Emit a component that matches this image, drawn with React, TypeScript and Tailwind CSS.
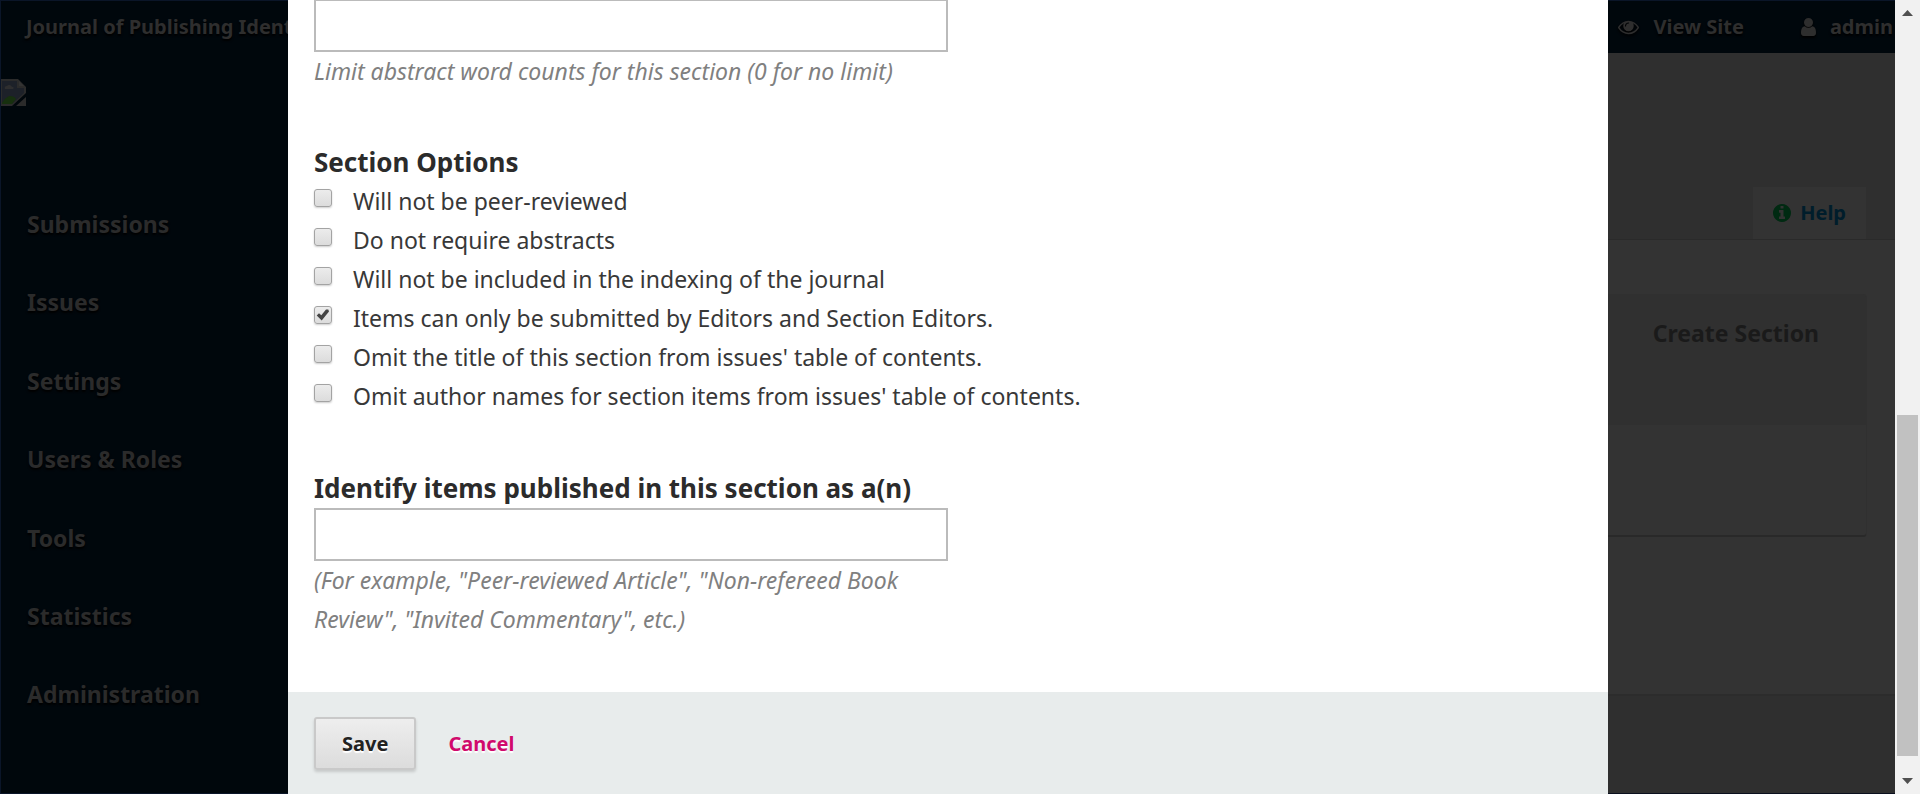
import React from "react";

const navItems = ["Submissions", "Issues", "Settings", "Users & Roles", "Tools", "Statistics", "Administration"];

const options = [
  { id: "reviewed", label: "Will not be peer-reviewed", checked: false },
  { id: "abstracts", label: "Do not require abstracts", checked: false },
  { id: "indexing", label: "Will not be included in the indexing of the journal", checked: false },
  { id: "editors", label: "Items can only be submitted by Editors and Section Editors.", checked: true },
  { id: "title", label: "Omit the title of this section from issues' table of contents.", checked: false },
  { id: "authors", label: "Omit author names for section items from issues' table of contents.", checked: false },
];

function EyeIcon() {
  return (
    <svg className="size-[21px] drop-shadow-[0_2px_1px_#000]" viewBox="0 64 1792 1792" fill="currentColor" aria-hidden="true">
      <path d="M1664 960q-152-236-381-353 61 104 61 225 0 185-131.5 316.5t-316.5 131.5-316.5-131.5-131.5-316.5q0-121 61-225-229 117-381 353 133 205 333.5 326.5t434.5 121.5 434.5-121.5 333.5-326.5zm-720-384q0-20-14-34t-34-14q-125 0-214.5 89.5t-89.5 214.5q0 20 14 34t34 14 34-14 14-34q0-86 61-147t147-61q20 0 34-14t14-34zm848 384q0 34-20 69-140 230-376.5 368.5t-499.5 138.5-499.5-139-376.5-368q-20-35-20-69t20-69q140-229 376.5-368t499.5-139 499.5 139 376.5 368q20 35 20 69z" />
    </svg>
  );
}

function UserIcon() {
  return (
    <svg className="h-[18px] w-[15px] drop-shadow-[0_2px_1px_#000]" viewBox="256 128 1280 1536" fill="currentColor" aria-hidden="true">
      <path d="M1536 1399q0 109-62.5 187t-150.5 78h-854q-88 0-150.5-78t-62.5-187q0-85 8.5-160.5t31.5-152 58.5-131 94-89 134.5-34.5q131 128 313 128t313-128q76 0 134.5 34.5t94 89 58.5 131 31.5 152 8.5 160.5zm-256-887q0 159-112.5 271.5t-271.5 112.5-271.5-112.5-112.5-271.5 112.5-271.5 271.5-112.5 271.5 112.5 112.5 271.5z" />
    </svg>
  );
}

function InfoIcon() {
  return (
    <svg className="size-[18px] text-[#002a12]" viewBox="128 128 1536 1536" fill="currentColor" aria-hidden="true">
      <path d="M1152 1376v-160q0-14-9-23t-23-9h-96v-512q0-14-9-23t-23-9h-320q-14 0-23 9t-9 23v160q0 14 9 23t23 9h96v320h-96q-14 0-23 9t-9 23v160q0 14 9 23t23 9h448q14 0 23-9t9-23zm-128-896v-160q0-14-9-23t-23-9h-192q-14 0-23 9t-9 23v160q0 14 9 23t23 9h192q14 0 23-9t9-23zm640 416q0 209-103 385.5t-279.5 279.5-385.5 103-385.5-103-279.5-279.5-103-385.5 103-385.5 279.5-279.5 385.5-103 385.5 103 279.5 279.5 103 385.5z" />
    </svg>
  );
}

function MissingImage() {
  return (
    <svg className="block h-[27px] w-[25px]" viewBox="0 0 25 27" role="img" aria-label="Journal logo">
      <path d="M0 0H17L25 8V14L11 27H0Z" fill="#2b2b2b" />
      <path d="M1 2H16V9H23V14L11 25H1Z" fill="#1d2129" />
      <path d="M18 2L23 7H18Z" fill="#333" />
      <path d="M4 10a2 2 0 0 1 2-3a3 3 0 0 1 5 1a1 1 0 0 1 1 2Z" fill="#2e2e2f" />
      <path d="M1 24C4 19 7 17 9 17C12 17 14 18 15 20L11 25H1Z" fill="#17300f" />
      <path d="M15 27L25 18V27Z" fill="#2b2b2b" />
    </svg>
  );
}

function Header() {
  return (
    <header className="flex h-[53px] shrink-0 items-center justify-between overflow-hidden border-t border-l border-[#0a1528] bg-[#00070c] pr-[2px] pl-[25px] text-[20px] font-bold text-[#2e2e2e] [text-shadow:0_2px_2px_#000]">
      <a href="#journal" className="whitespace-nowrap">Journal of Publishing Identifiers</a>
      <nav className="flex items-center gap-[57px]">
        <a href="#site" className="flex items-center gap-[14px]">
          <EyeIcon />
          View Site
        </a>
        <a href="#user" className="flex items-center gap-[14px]">
          <UserIcon />
          admin
        </a>
      </nav>
    </header>
  );
}

function Sidebar() {
  return (
    <aside className="w-[288px] shrink-0 border-b border-l border-[#0a1528] bg-[#00070c] pt-[26px]">
      <MissingImage />
      <ul className="mt-[79px] flex h-[549px] flex-col">
        {navItems.map((item) => (
          <li key={item} className="flex flex-1 items-center pl-[26px]">
            <a href="#nav" className="text-[23px] font-bold text-[#2b2b2b] [text-shadow:0_2px_2px_#000]">{item}</a>
          </li>
        ))}
      </ul>
    </aside>
  );
}

function Workspace() {
  return (
    <main className="flex flex-1 flex-col border-b border-[#0a0f1e] bg-[#333333]">
      <div className="flex h-[187px] items-end justify-end border-b border-[#2a2a2a] bg-[#2f2f2f] pr-[29px]">
        <a href="#help" className="flex h-[52px] items-center gap-[9px] bg-[#333333] px-[20px] text-[20px] font-bold text-[#001d2b]">
          <InfoIcon />
          Help
        </a>
      </div>
      <section className="mt-[54px] mr-[28px] h-[243px] rounded-[4px] border-r border-b-2 border-r-[#303030] border-b-[#292929]">
        <div className="flex h-[131px] justify-end rounded-t-[4px] bg-[#303030] pt-[20px] pr-[47px]">
          <a href="#create" className="text-[23px] leading-[39px] font-bold text-[#1a1a1a]">Create Section</a>
        </div>
      </section>
      <footer className="mt-auto h-[99px] border-t-2 border-[#2c2c2c] bg-[#2f2f2f]" />
    </main>
  );
}

function Scrollbar() {
  return (
    <div className="flex w-[25px] shrink-0 flex-col items-center bg-[#f1f1f1] py-[10px]" aria-hidden="true">
      <svg className="h-[6px] w-[11px]" viewBox="0 0 11 6"><path d="M5.5 0L11 6H0Z" fill="#505050" /></svg>
      <div className="flex w-[21px] flex-1 flex-col pt-[399px] pb-[22px]">
        <div className="flex-1 bg-[#c1c1c1]" />
      </div>
      <svg className="h-[6px] w-[11px]" viewBox="0 0 11 6"><path d="M0 0H11L5.5 6Z" fill="#505050" /></svg>
    </div>
  );
}

function Option({ id, label, checked }: { id: string; label: string; checked: boolean }) {
  return (
    <li className="flex h-[39px] items-start">
      <span className="relative mt-[7px] mr-[21px] block size-[18px]">
        <input
          id={id}
          type="checkbox"
          defaultChecked={checked}
          className="peer block size-[18px] appearance-none rounded-[3px] border border-[#a3a3a3] bg-linear-to-b from-[#ececec] to-[#dcdcdc] shadow-[0_1px_2px_rgba(0,0,0,0.2)]"
        />
        <svg className="pointer-events-none absolute inset-0 hidden size-[18px] peer-checked:block" viewBox="0 0 18 18">
          <path d="M2.7 9.5L5 7.3L7.3 9.3L12 3.6L14.3 3.6L15 5.5L7.7 14.6Z" fill="#444" />
        </svg>
      </span>
      <label htmlFor={id} className="leading-[39px]">{label}</label>
    </li>
  );
}

function SectionDialog() {
  return (
    <form
      role="dialog"
      aria-label="Create Section"
      className="absolute inset-y-0 right-[287px] left-[288px] flex flex-col justify-end overflow-hidden bg-white text-[23px] leading-[39px] text-[#383838]"
      onSubmit={(e) => e.preventDefault()}
    >
      <div className="flex flex-col gap-[52px] px-[26px] pb-[53px]">
        <div className="w-1/2">
          <input id="words" aria-label="Word Count" className="block h-[53px] w-full border-2 border-[#bbbbbb] bg-white px-3" />
          <p className="text-[#808080] italic">Limit abstract word counts for this section (0 for no limit)</p>
        </div>
        <fieldset>
          <legend className="text-[26px] leading-[39px] font-bold text-[#2b2b2b]">Section Options</legend>
          <ul className="pb-px">
            {options.map((o) => <Option key={o.id} {...o} />)}
          </ul>
        </fieldset>
        <div className="w-1/2">
          <label htmlFor="identify" className="block text-[26px] leading-[39px] font-bold whitespace-nowrap text-[#2b2b2b]">Identify items published in this section as a(n)</label>
          <input id="identify" className="block h-[53px] w-full border-2 border-[#bbbbbb] bg-white px-3" />
          <p className="text-[#808080] italic">(For example, "Peer-reviewed Article", "Non-refereed Book Review", "Invited Commentary", etc.)</p>
        </div>
      </div>
      <div className="flex h-[102px] shrink-0 items-center gap-[32px] bg-[#e8ecec] px-[26px] text-[20px] font-bold">
        <button type="submit" className="h-[53px] rounded-[3px] border-2 border-[#c9c9c9] bg-linear-to-b from-[#eeeeee] to-[#dcdcdc] px-[26px] text-[#222222] shadow-[0_2px_3px_rgba(0,0,0,0.15)] [text-shadow:0_2px_1px_#fff]">Save</button>
        <a href="#cancel" className="text-[#d00a6c] [text-shadow:0_2px_1px_#fff]">Cancel</a>
      </div>
    </form>
  );
}

export default function App() {
  return (
    <div className="flex h-screen w-full overflow-hidden font-['Noto_Sans',sans-serif]">
      <div className="relative flex flex-1 flex-col overflow-hidden">
        <Header />
        <div className="flex flex-1">
          <Sidebar />
          <Workspace />
        </div>
        <SectionDialog />
      </div>
      <Scrollbar />
    </div>
  );
}
